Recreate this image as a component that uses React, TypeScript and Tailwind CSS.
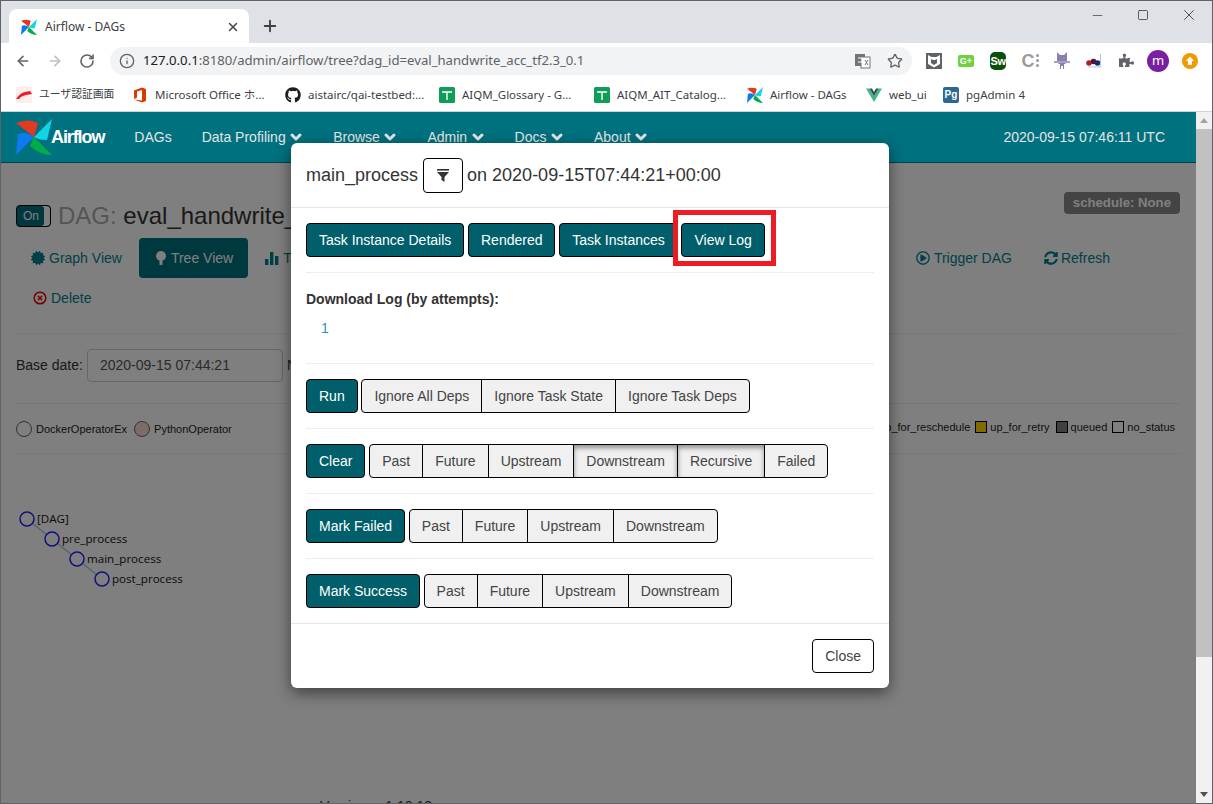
import React from "react";
import { ArrowLeft, ArrowRight, RotateCw, Info, Star, Plus, X, Minus, Square, ChevronDown, CircleX } from "lucide-react";
import { FaCertificate, FaGithub, FaPuzzlePiece, FaRegPlayCircle, FaSyncAlt } from "react-icons/fa";

function Pinwheel({ s }: { s: number }) {
  return (
    <svg width={s} height={s} viewBox="0 0 36 36" className="shrink-0">
      <path d="M18 18 L0 4 Q12 -1 22 4 Z" fill="#e43921" />
      <path d="M18 18 L36 0 L31 21 Q22 21 18 18 Z" fill="#11d4e6" />
      <path d="M18 18 L36 36 Q24 36 14 27 Q16 22 18 18 Z" fill="#00ad46" />
      <path d="M18 18 L0 36 L2 15 Q10 12 18 18 Z" fill="#0c7bf0" />
    </svg>
  );
}

function Sheet() {
  return (
    <svg width="16" height="16" viewBox="0 0 16 16" className="shrink-0">
      <rect width="16" height="16" rx="1.5" fill="#0f9d58" />
      <path d="M3 5h10M8 5V13" stroke="#fff" strokeWidth="1.4" />
    </svg>
  );
}

const bookmarks: { w: string; icon: React.ReactNode; label: string; cls?: string }[] = [
  {
    w: "w-[116px]",
    label: "ユーザ認証画面",
    cls: "text-[10.8px]",
    icon: (
      <svg width="16" height="16" viewBox="0 0 16 16" className="shrink-0">
        <rect width="16" height="16" fill="#fdeeee" />
        <path d="M0 12 Q4 6 9 5 L14 4 L16 7 L10 8 Q5 9 3 12 Z" fill="#ee1c25" />
      </svg>
    ),
  },
  {
    w: "w-[153px]",
    label: "Microsoft Office ホ...",
    icon: (
      <svg width="16" height="16" viewBox="0 0 16 16" className="shrink-0">
        <path d="M2 3.5 L10 0.5 L14 2 V14 L10 15.5 L2 12.5 L10 13.5 V3 L5 4.5 V10.5 L2 12 Z" fill="#d83b01" />
      </svg>
    ),
  },
  { w: "w-[154px]", label: "aistairc/qai-testbed:...", icon: <FaGithub size={16} color="#1b1f23" className="shrink-0" /> },
  { w: "w-[155px]", label: "AIQM_Glossary - G...", icon: <Sheet /> },
  { w: "w-[153px]", label: "AIQM_AIT_Catalog...", icon: <Sheet /> },
  { w: "w-[119px]", label: "Airflow - DAGs", icon: <Pinwheel s={16} /> },
  {
    w: "w-[77px]",
    label: "web_ui",
    icon: (
      <svg width="16" height="16" viewBox="0 0 16 16" className="shrink-0">
        <path d="M0 1.5 H3.5 L8 9 L12.5 1.5 H16 L8 15 Z" fill="#41b883" />
        <path d="M3.5 1.5 H6 L8 5 L10 1.5 H12.5 L8 9 Z" fill="#35495e" />
      </svg>
    ),
  },
  {
    w: "w-auto",
    label: "pgAdmin 4",
    icon: (
      <span className="w-4 h-4 rounded-[2px] bg-[#2f6792] text-white text-[10px] font-bold leading-[15px] text-center shrink-0 font-['Liberation_Sans',sans-serif]">Pg</span>
    ),
  },
];

function Ext({ children }: { children: React.ReactNode }) {
  return <div className="w-8 h-7 flex items-center justify-center shrink-0">{children}</div>;
}

function Toolbar() {
  return (
    <div className="h-[35px] bg-white flex items-center shrink-0">
      <div className="w-[109px] flex items-center shrink-0 pl-[14px] gap-[16px] text-[#5f6368]">
        <ArrowLeft size={16} strokeWidth={2.4} />
        <ArrowRight size={16} strokeWidth={2.4} color="#bcbfc3" />
        <RotateCw size={16} strokeWidth={2.4} />
      </div>
      <div className="w-[802px] h-[28px] rounded-full bg-[#f1f3f4] flex items-center pl-[9px] pr-[9px] shrink-0">
        <Info size={16} strokeWidth={2} color="#5f6368" />
        <span className="ml-[8px] text-[13.15px] font-['Noto_Sans',sans-serif] text-[#5f6368]">
          <span className="text-[#202124]">127.0.0.1</span>:8180/admin/airflow/tree?dag_id=eval_handwrite_acc_tf2.3_0.1
        </span>
        <div className="ml-auto flex items-center gap-[16px]">
          <svg width="16" height="16" viewBox="0 0 16 16">
            <rect x="0" y="1" width="10" height="12" fill="#70757a" />
            <rect x="6" y="4" width="9" height="11" fill="#fff" stroke="#70757a" />
            <path d="M3 5h4v4H3M10 7l3 5M13 7l-3 5" stroke="#fff" strokeWidth="1" fill="none" />
            <path d="M10 7l3 5M13 7l-3 5" stroke="#70757a" strokeWidth="1" fill="none" />
          </svg>
          <Star size={16} strokeWidth={2} color="#5f6368" />
        </div>
      </div>
      <div className="flex items-center ml-[6px]">
        <Ext>
          <svg width="16" height="16" viewBox="0 0 16 16">
            <rect width="16" height="16" fill="#5f6368" />
            <path d="M2 2 L5.5 4 H10.5 L14 2 V11 L8 14.5 L2 11 Z" fill="#fff" />
            <path d="M5 6 L7 7 H9 L11 6 V10 L8 12 L5 10 Z" fill="#5f6368" />
          </svg>
        </Ext>
        <Ext>
          <span className="w-[16px] h-[12px] bg-[#6fd13f] rounded-[2px] text-white text-[9px] font-bold leading-[12px] text-center font-['Liberation_Sans',sans-serif]">G+</span>
        </Ext>
        <Ext>
          <span className="w-[16px] h-[18px] bg-[#0b4f0b] rounded-[5px] text-white text-[11px] font-bold leading-[18px] text-center tracking-[-0.5px] font-['Liberation_Sans',sans-serif]">Sw</span>
        </Ext>
        <Ext>
          <span className="text-[#9a9a9a] text-[18px] font-bold leading-none font-['Liberation_Sans',sans-serif]">C</span>
          <span className="ml-[1px] flex flex-col gap-[2px]">
            <span className="w-[3px] h-[3px] rounded-full bg-[#9a9a9a]" />
            <span className="w-[3px] h-[3px] rounded-full bg-[#9a9a9a]" />
            <span className="w-[3px] h-[3px] rounded-full bg-[#9a9a9a]" />
          </span>
        </Ext>
        <Ext>
          <svg width="16" height="18" viewBox="0 0 16 18">
            <path d="M3 0 L6 3 H10 L13 0 V8 Q13 12 10 12 V17 H9 V14 H7 V17 H6 V12 Q3 12 3 8 Z" fill="#8b7fb0" />
            <path d="M0 9 H16 V11 H0 Z" fill="#a89fc6" />
          </svg>
        </Ext>
        <Ext>
          <svg width="16" height="16" viewBox="0 0 16 16">
            <circle cx="3" cy="10" r="2.8" fill="#b01c2e" />
            <circle cx="7.5" cy="8.5" r="2.8" fill="#5a1030" />
            <circle cx="11.5" cy="10" r="2.8" fill="#1c2a6b" />
            <path d="M14.5 1 V14 H2" stroke="#a9c7e6" fill="none" />
          </svg>
        </Ext>
        <Ext>
          <FaPuzzlePiece size={15} color="#5f6368" />
        </Ext>
        <Ext>
          <span className="w-[22px] h-[22px] rounded-full bg-[#7b1fa2] text-white text-[13px] leading-[21px] text-center font-['Noto_Sans',sans-serif]">m</span>
        </Ext>
        <Ext>
          <svg width="16" height="16" viewBox="0 0 16 16">
            <circle cx="8" cy="8" r="8" fill="#f29900" />
            <path d="M8 3.5 L12 8 H10 V12 H6 V8 H4 Z" fill="#fff" />
          </svg>
        </Ext>
      </div>
    </div>
  );
}

function Navbar() {
  const items = ["Data Profiling", "Browse", "Admin", "Docs", "About"];
  return (
    <div className="h-[51px] bg-[#00717f] border-b border-[#00434c] flex items-center pl-[15px] pr-[31px] shrink-0 text-[14px] text-[#e3e6e6]">
      <Pinwheel s={36} />
      <span className="-ml-px text-white text-[18px] font-bold tracking-[-1.1px] mr-[15px]">Airflow</span>
      <span className="px-[15px]">DAGs</span>
      {items.map((t) => (
        <span key={t} className="px-[15px] flex items-center gap-[2.5px]">
          {t}
          <ChevronDown size={16} strokeWidth={4.5} className="-mr-[1px]" />
        </span>
      ))}
      <span className="ml-auto">2020-09-15 07:46:11 UTC</span>
    </div>
  );
}

function Pill({ icon, label, active, cls }: { icon: React.ReactNode; label: string; active?: boolean; cls?: string }) {
  return (
    <div className={`h-10 px-[15px] rounded-[4px] flex items-center shrink-0 ${active ? "bg-[#00717f] text-white" : "text-[#017e8d]"} ${cls ?? "gap-[4px]"}`}>
      {icon}
      {label}
    </div>
  );
}

function Tree() {
  const nodes = [
    [26, 519, "[DAG]"],
    [51, 539, "pre_process"],
    [76, 559, "main_process"],
    [101, 579, "post_process"],
  ] as const;
  return (
    <svg width="280" height="150" viewBox="15 480 280 150" className="block">
      <path d="M26 519 L101 579" stroke="#b0c4de" strokeWidth="1.6" fill="none" />
      {nodes.map(([x, y, t]) => (
        <g key={t}>
          <circle cx={x} cy={y} r="7" fill="#fff" stroke="#2020ff" strokeWidth="1.5" />
          <text x={x + 10} y={y + 4} fontSize="11.6" fill="#111" fontFamily="'Open Sans', sans-serif">{t}</text>
        </g>
      ))}
    </svg>
  );
}

function Page() {
  return (
    <div className="flex-1 min-w-0 bg-white px-[15px] text-[14px] text-[#333] overflow-hidden">
      <div className="mt-[29px] flex items-start h-[46px]">
        <div className="mt-[13px] w-[35px] h-[22px] rounded-[4px] border border-black bg-[#00717f] text-white text-[12px] leading-[20px] pl-[6px] shrink-0 shadow-[inset_-6px_0_0_#fff]">On</div>
        <div className="ml-[7px] text-[24px] leading-[30px] mt-[9px] whitespace-nowrap text-[#333]">
          <span className="text-[#aaa]">DAG:</span> eval_handwrite_acc_tf2.3_0.1
        </div>
        <div className="ml-auto mr-px h-[22px] px-[9px] rounded-[4px] bg-[#888] text-white text-[13.2px] font-bold leading-[21px]">schedule: None</div>
      </div>
      <div className="flex flex-wrap gap-x-[2px] pr-[56px]">
        <Pill icon={<FaCertificate size={14} />} label="Graph View" />
        <Pill
          active
          label="Tree View"
          cls="gap-[3px]"
          icon={
            <svg width="14" height="14" viewBox="0 0 14 14">
              <circle cx="7" cy="5" r="5" fill="#fff" />
              <rect x="5.5" y="8" width="3" height="6" fill="#fff" />
            </svg>
          }
        />
        <Pill
          label="Task Duration"
          icon={
            <svg width="14" height="14" viewBox="0 0 14 14" fill="#017e8d">
              <rect x="0" y="8" width="3.4" height="6" />
              <rect x="5" y="1" width="3.4" height="13" />
              <rect x="10" y="5" width="3.4" height="9" />
            </svg>
          }
        />
        <div className="flex-1" />
        <Pill icon={<FaRegPlayCircle size={14} />} label="Trigger DAG" />
        <Pill icon={<FaSyncAlt size={14} />} label="Refresh" cls="gap-[3px]" />
        <div className="basis-full" />
        <Pill icon={<CircleX size={14} strokeWidth={2.5} color="#e00000" className="ml-[2px]" />} label="Delete" cls="gap-[4px]" />
      </div>
      <div className="mt-[15px] border-t border-[#eee]" />
      <div className="h-[69px] flex items-start pt-[15px]">
        <span className="leading-[33px]">Base date:</span>
        <div className="ml-[4px] w-[196px] h-[33px] rounded-[4px] border border-[#ccc] px-[12px] flex items-center text-[#555]">2020-09-15 07:44:21</div>
        <span className="ml-[4px] text-[#333] leading-[33px]">Number of runs:</span>
      </div>
      <div className="border-t border-[#eee]" />
      <div className="h-[49px] flex items-center justify-between text-[11px] text-[#222]">
        <div className="flex items-center mt-[1px]">
          <span className="w-4 h-4 rounded-full border border-[#666] bg-white" />
          <span className="ml-[4px]">DockerOperatorEx</span>
          <span className="ml-[7px] w-4 h-4 rounded-full border border-[#666] bg-[#fadbd2]" />
          <span className="ml-[4px]">PythonOperator</span>
        </div>
        <div className="flex items-center -mt-[3px] mr-[6px]">
          <span>up_for_reschedule</span>
          <span className="ml-[5px] w-3 h-3 border border-black bg-[#ffd700]" />
          <span className="ml-[3px]">up_for_retry</span>
          <span className="ml-[6px] w-3 h-3 border border-black bg-[#808080]" />
          <span className="ml-[3px]">queued</span>
          <span className="ml-[5px] w-3 h-3 border border-black bg-white" />
          <span className="ml-[3px]">no_status</span>
        </div>
      </div>
      <div className="border-t border-[#eee]" />
      <div className="mt-[26px]">
        <Tree />
      </div>
      <div className="mt-[168px] ml-[304px] text-[14px] leading-[16px] text-[#333] whitespace-nowrap">Version : v1.10.12</div>
    </div>
  );
}

function Btn({ children }: { children: React.ReactNode }) {
  return (
    <div className="h-[34px] px-[12px] rounded-[4px] border border-black bg-[#005f6b] text-white flex items-center shrink-0">{children}</div>
  );
}

function Group({ items, active = [] }: { items: string[]; active?: string[] }) {
  return (
    <div className="flex">
      {items.map((t, i) => (
        <div
          key={t}
          className={`h-[34px] px-[12px] border border-black bg-[#f0f0f0] text-[#444] flex items-center shrink-0 ${i > 0 ? "-ml-px" : ""} ${i === 0 ? "rounded-l-[4px]" : ""} ${i === items.length - 1 ? "rounded-r-[4px]" : ""} ${active.includes(t) ? "shadow-[inset_0_3px_5px_rgba(0,0,0,0.4)]" : ""}`}
        >
          {t}
        </div>
      ))}
    </div>
  );
}

function Row({ label, items, active, last }: { label: string; items: string[]; active?: string[]; last?: boolean }) {
  return (
    <div className={`flex items-center gap-[3.7px] ${last ? "" : "pb-[15px] mb-[15px] border-b border-[#eee]"}`}>
      <Btn>{label}</Btn>
      <Group items={items} active={active} />
    </div>
  );
}

function Modal() {
  return (
    <div className="absolute left-[290px] top-[142px] w-[598px] h-[545px] bg-white rounded-[6px] shadow-[0_5px_15px_rgba(0,0,0,0.5)] text-[14px] text-[#333] flex flex-col">
      <div className="h-[65px] border-b border-[#e5e5e5] px-[15px] flex items-center text-[18px] shrink-0">
        <span>main_process</span>
        <span className="ml-[5px] w-[40px] h-[35px] border border-black rounded-[4px] flex items-center justify-center">
          <svg width="12" height="13" viewBox="0 0 12 13" fill="#333">
            <rect x="0" y="0" width="12" height="1.6" />
            <path d="M0 3 H12 L7.5 8 V13 L4.5 11 V8 Z" />
          </svg>
        </span>
        <span className="ml-[4px]">on 2020-09-15T07:44:21+00:00</span>
      </div>
      <div className="px-[15px] pt-[15px] flex-1">
        <div className="flex gap-[3.7px] relative pb-[15px] border-b border-[#eee]">
          <Btn>Task Instance Details</Btn>
          <Btn>Rendered</Btn>
          <Btn>Task Instances</Btn>
          <Btn>View Log</Btn>
          <div className="absolute left-[367px] -top-[13px] w-[103px] h-[56px] border-[5px] border-[#ed1c24]" />
        </div>
        <div className="mt-[16px] font-bold h-[20px] leading-[20px]">Download Log (by attempts):</div>
        <div className="mt-[9px] ml-[15px] h-[20px] leading-[20px] text-[#1b9aab]">1</div>
        <div className="mt-[25px] border-t border-[#eee] mb-[15px]" />
        <Row label="Run" items={["Ignore All Deps", "Ignore Task State", "Ignore Task Deps"]} />
        <Row label="Clear" items={["Past", "Future", "Upstream", "Downstream", "Recursive", "Failed"]} active={["Downstream", "Recursive"]} />
        <Row label="Mark Failed" items={["Past", "Future", "Upstream", "Downstream"]} />
        <Row label="Mark Success" items={["Past", "Future", "Upstream", "Downstream"]} last />
      </div>
      <div className="h-[65px] border-t border-[#e5e5e5] px-[15px] flex items-center justify-end shrink-0">
        <div className="h-[34px] px-[12px] rounded-[4px] border border-black text-[#444] flex items-center">Close</div>
      </div>
    </div>
  );
}

export default function App() {
  return (
    <div className="relative w-[1213px] h-[804px] overflow-hidden border border-[#5f6368] bg-white flex flex-col font-['Liberation_Sans',Arial,sans-serif]">
      <div className="h-[42px] bg-[#dee1e6] flex items-end pl-[8px] shrink-0">
        <div className="w-[240px] h-[34px] bg-white rounded-t-[8px] flex items-center pl-[12px] pr-[9px] pt-[2px] text-[12px] text-[#3c4043] font-['Noto_Sans',sans-serif]">
          <Pinwheel s={16} />
          <span className="ml-[8px]">Airflow - DAGs</span>
          <X size={14} strokeWidth={2.5} className="ml-auto" color="#444" />
        </div>
        <Plus size={18} strokeWidth={2.5} color="#3c4043" className="ml-[12px] mb-[8px]" />
        <div className="ml-auto flex self-start text-[#222]">
          <div className="w-[46px] h-[28px] flex items-center justify-center"><Minus size={15} strokeWidth={1} /></div>
          <div className="w-[46px] h-[28px] flex items-center justify-center"><Square size={12} strokeWidth={1.4} /></div>
          <div className="w-[46px] h-[28px] flex items-center justify-center"><X size={18} strokeWidth={1} /></div>
        </div>
      </div>
      <Toolbar />
      <div className="h-[34px] bg-white border-b border-[#d0d2d5] flex items-center pl-[15px] shrink-0 text-[11.5px] text-[#3c4043] font-['Noto_Sans','Noto_Sans_CJK_JP',sans-serif]">
        {bookmarks.map((b) => (
          <div key={b.label} className={`${b.w} flex items-center gap-[7px] shrink-0 whitespace-nowrap overflow-hidden`}>
            {b.icon}
            <span className={b.cls}>{b.label}</span>
          </div>
        ))}
      </div>
      <div className="flex-1 min-h-0 flex">
        <div className="flex-1 min-w-0 flex flex-col">
          <Navbar />
          <Page />
        </div>
        <div className="w-[16px] bg-[#f1f1f1] flex flex-col items-center shrink-0 relative z-10">
          <div className="h-[17px] flex items-center"><div className="w-0 h-0 border-x-[4px] border-x-transparent border-b-[5px] border-b-[#a3a3a3]" /></div>
          <div className="w-full h-[528px] bg-[#c1c1c1]" />
          <div className="mt-auto h-[17px] flex items-center"><div className="w-0 h-0 border-x-[4px] border-x-transparent border-t-[5px] border-t-[#505050]" /></div>
        </div>
      </div>
      <div className="absolute left-0 top-[162px] right-[16px] bottom-0 bg-black/50" />
      <Modal />
    </div>
  );
}
